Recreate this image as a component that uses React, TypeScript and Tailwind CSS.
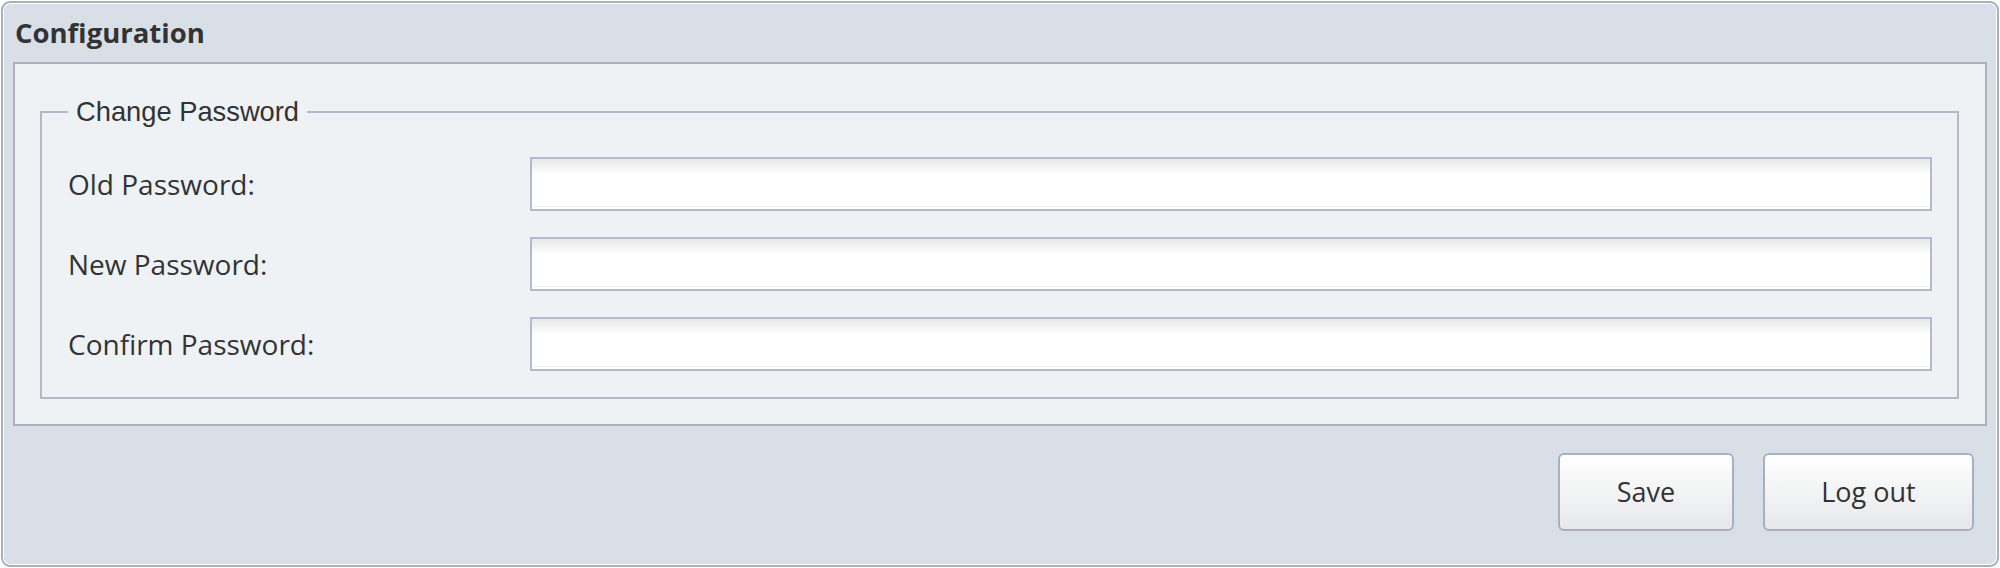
import React from "react";

const labelFont = { fontFamily: '"Open Sans", "Noto Sans", sans-serif' };

function Field({ label }: { label: string }) {
  return (
    <>
      <label className="text-[28px] leading-none text-[#333333]" style={labelFont}>
        {label}
      </label>
      <input
        type="password"
        className="h-[54px] w-full border-2 border-[#b5b9ca] bg-[linear-gradient(to_bottom,#e7e9e6_0px,#ffffff_16px)] shadow-[inset_0_-2px_0_#ffffff,inset_0_-3px_0_#eeeeee] outline-none"
      />
    </>
  );
}

function Button({ children, width }: { children: React.ReactNode; width: string }) {
  return (
    <button
      className={`${width} h-[78px] rounded-[6px] border-2 border-[#a9afbd] bg-[linear-gradient(to_bottom,#ffffff,#e7e8ea)] text-[27px] text-[#333333]`}
      style={labelFont}
    >
      {children}
    </button>
  );
}

export default function App() {
  return (
    <div className="h-[568px] w-full bg-white p-px">
      <div className="flex h-[566px] flex-col rounded-[9px] border-2 border-[#a9afbd] bg-[#d9dfe7] shadow-[inset_0_0_0_1px_#ffffff]">
        <div className="flex h-[59px] items-center pl-[12px]">
          <span
            className="text-[27.5px] font-bold text-[#333333]"
            style={{ fontFamily: '"Open Sans", "Noto Sans", sans-serif' }}
          >
            Configuration
          </span>
        </div>
        <div className="mx-[10px] border-2 border-[#aab0be] bg-[#eef2f5] pl-[25px] pr-[26px] pb-[25px]">
          <fieldset className="mt-[32px] border-2 border-[#b4b8c8] pl-[26px] pr-[25px] pt-[30px] pb-[26px]">
            <legend
              className="px-[8px] text-[27.3px] leading-[31px] text-[#333333]"
              style={{ fontFamily: '"Liberation Sans", Arial, sans-serif' }}
            >
              Change Password
            </legend>
            <div className="grid grid-cols-[462px_1fr] items-center gap-y-[26px]">
              <Field label="Old Password:" />
              <Field label="New Password:" />
              <Field label="Confirm Password:" />
            </div>
          </fieldset>
        </div>
        <div className="mt-[27px] flex justify-end gap-[29px] pr-[23px]">
          <Button width="w-[176px]">Save</Button>
          <Button width="w-[211px]">Log out</Button>
        </div>
      </div>
    </div>
  );
}
